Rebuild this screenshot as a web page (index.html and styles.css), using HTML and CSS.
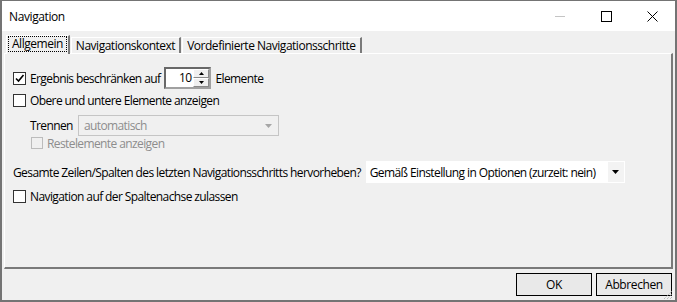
FILE: index.html
```html
<!DOCTYPE html>
<html lang="de">
  <head>
    <meta charset="UTF-8" />
    <title>Navigation</title>
    <link rel="stylesheet" href="styles.css">
  </head>
  <body>
    <div class="window">
      <div class="titlebar">
        <span class="title">Navigation</span>
        <div class="caption-buttons">
          <span class="cap cap-min"><svg width="10" height="10" viewBox="0 0 10 10"><path d="M0 5.5h10" stroke="#c4c4c4" stroke-width="1"/></svg></span>
          <span class="cap"><svg width="11" height="11" viewBox="0 0 11 11"><rect x="0.5" y="0.5" width="10" height="10" fill="none" stroke="#000"/></svg></span>
          <span class="cap"><svg width="11" height="11" viewBox="0 0 11 11"><path d="M0.5 0.5l10 10M10.5 0.5l-10 10" stroke="#000" stroke-width="1"/></svg></span>
        </div>
      </div>
      <div class="client">
        <div class="tabs">
          <div class="tab active"><span class="focus">Allgemein</span></div>
          <div class="tab">Navigationskontext</div>
          <div class="tab">Vordefinierte Navigationsschritte</div>
        </div>
        <div class="panel">
          <div class="row row-limit">
            <span class="check checked"><svg width="11" height="11" viewBox="0 0 11 11"><path d="M2 5.5l2.5 2.5 5-6" fill="none" stroke="#000" stroke-width="1.6"/></svg></span>
            <span class="label">Ergebnis beschränken auf</span>
            <div class="spinner">
              <span class="spin-value">10</span>
              <div class="spin-buttons">
                <span class="spin-btn"><svg width="5" height="3" viewBox="0 0 5 3"><path d="M2.5 0L5 3H0z" fill="#000"/></svg></span>
                <span class="spin-btn"><svg width="5" height="3" viewBox="0 0 5 3"><path d="M0 0h5L2.5 3z" fill="#000"/></svg></span>
              </div>
            </div>
            <span class="label">Elemente</span>
          </div>
          <div class="row row-topbottom">
            <span class="check"></span>
            <span class="label">Obere und untere Elemente anzeigen</span>
          </div>
          <div class="row row-split">
            <span class="label">Trennen</span>
            <div class="select disabled">
              <span>automatisch</span>
              <svg width="7" height="4" viewBox="0 0 7 4"><path d="M0 0h7L3.5 4z" fill="#a6a6a6"/></svg>
            </div>
          </div>
          <div class="row row-rest">
            <span class="check disabled"></span>
            <span class="label muted">Restelemente anzeigen</span>
          </div>
          <div class="row row-highlight">
            <span class="label">Gesamte Zeilen/Spalten des letzten Navigationsschritts hervorheben?</span>
            <div class="combo">
              <span class="combo-text">Gemäß Einstellung in Optionen (zurzeit: nein)</span>
              <span class="combo-arrow"><svg width="7" height="4" viewBox="0 0 7 4"><path d="M0 0h7L3.5 4z" fill="#000"/></svg></span>
            </div>
          </div>
          <div class="row row-axis">
            <span class="check"></span>
            <span class="label">Navigation auf der Spaltenachse zulassen</span>
          </div>
        </div>
        <div class="footer">
          <button class="btn">OK</button>
          <button class="btn">Abbrechen</button>
          <svg class="grip" width="12" height="12" viewBox="0 0 12 12">
            <path d="M11 3L3 11M11 6L6 11M11 9L9 11" stroke="#a0a0a0" stroke-width="1" stroke-dasharray="1 1"/>
          </svg>
        </div>
      </div>
    </div>
  </body>
</html>
```

FILE: styles.css
```css
body {
  margin: 0;
  padding: 0;
  font-family: "Open Sans", "Noto Sans", sans-serif;
  font-size: 12px;
  color: #000;
  background: #f0f0f0;
  white-space: nowrap;
}
.window {
  width: 677px;
  height: 302px;
  box-sizing: border-box;
  border: 1px solid #747474;
  border-width: 1px 2px 2px 2px;
  display: flex;
  flex-direction: column;
  background: #f0f0f0;
}
.titlebar {
  height: 30px;
  background: #fff;
  display: flex;
  align-items: center;
  justify-content: space-between;
}
.title {
  padding-left: 7px;
  font-size: 12px;
  letter-spacing: -0.4px;
}
.caption-buttons {
  display: flex;
  height: 30px;
}
.cap {
  width: 46px;
  display: flex;
  align-items: center;
  justify-content: center;
}
.client {
  flex: 1;
  display: flex;
  flex-direction: column;
  padding: 4px 2px 0 2px;
  letter-spacing: -0.6px;
}
.tabs {
  display: flex;
  align-items: flex-end;
  height: 18px;
  padding-left: 2px;
  position: relative;
  z-index: 1;
  letter-spacing: -0.48px;
}
.tab {
  height: 16px;
  box-sizing: border-box;
  padding: 0 4px 0 4px;
  border-top: 1px solid #fff;
  border-left: 1px solid #fff;
  border-right: 2px solid #7a7a7a;
  line-height: 15px;
  margin-right: 1px;
}
.tab.active {
  height: 19px;
  margin-bottom: -1px;
  padding: 1px 2px 0 2px;
  background: #f0f0f0;
  line-height: 14px;
}
.focus {
  display: inline-block;
  outline: 1px dotted #000;
  padding: 0 3px;
  line-height: 14px;
}
.panel {
  height: 216px;
  box-sizing: border-box;
  border-top: 1px solid #fff;
  border-left: 1px solid #fff;
  border-right: 2px solid #7a7a7a;
  border-bottom: 2px solid #7a7a7a;
  padding: 13px 0 0 8px;
  display: flex;
  flex-direction: column;
}
.row {
  display: flex;
  align-items: center;
  gap: 4px;
}
.row-limit { height: 22px; }
.row-topbottom { height: 14px; margin-top: 4px; }
.row-split { height: 21px; margin-top: 8px; padding-left: 17px; gap: 5px; }
.row-rest { height: 14px; margin-top: 0; padding-left: 18px; }
.row-highlight { height: 22px; margin-top: 11px; gap: 5px; }
.row-axis { height: 14px; margin-top: 6px; }
.check {
  width: 13px;
  height: 13px;
  box-sizing: border-box;
  border: 1px solid #333;
  background: #fff;
  display: flex;
  align-items: center;
  justify-content: center;
  flex: none;
}
.check.disabled {
  width: 12px;
  height: 12px;
  border-color: #bcbcbc;
  background: #f0f0f0;
}
.muted { color: #8d8d8d; }
.spinner {
  width: 47px;
  height: 22px;
  box-sizing: border-box;
  border: 2px solid #686868;
  border-right-color: #a0a0a0;
  border-bottom-color: #a0a0a0;
  background: #fff;
  display: flex;
  align-items: stretch;
}
.spin-value {
  flex: 1;
  text-align: right;
  padding-right: 2px;
  line-height: 18px;
}
.spin-buttons {
  width: 16px;
  display: flex;
  flex-direction: column;
}
.spin-btn {
  flex: 1;
  background: #f0f0f0;
  border: 1px solid #fff;
  border-right-color: #8a8a8a;
  border-bottom-color: #8a8a8a;
  display: flex;
  align-items: center;
  justify-content: center;
}
.select {
  width: 201px;
  height: 21px;
  box-sizing: border-box;
  border: 1px solid #c5c5c5;
  display: flex;
  align-items: center;
  justify-content: space-between;
  padding: 0 6px 0 5px;
}
.select.disabled { color: #8d8d8d; }
.combo {
  width: 259px;
  height: 22px;
  background: #fff;
  display: flex;
  align-items: center;
  justify-content: space-between;
}
.combo-text { padding-left: 4px; }
.combo-arrow {
  width: 16px;
  height: 20px;
  background: #f3f3f3;
  display: flex;
  align-items: center;
  justify-content: center;
  margin-right: 1px;
}
.footer {
  flex: 1;
  display: flex;
  justify-content: flex-end;
  align-items: flex-start;
  padding-top: 4px;
  gap: 4px;
  position: relative;
}
.btn {
  width: 76px;
  height: 23px;
  border: 1px solid #000;
  background: #e9e9e9;
  font-family: "Open Sans", "Noto Sans", sans-serif;
  font-size: 12px;
  letter-spacing: -0.4px;
  color: #000;
  margin: 0;
  padding: 0;
}
.btn:last-of-type { margin-right: 1px; }
.grip {
  position: absolute;
  right: 0;
  bottom: 0;
}
```
